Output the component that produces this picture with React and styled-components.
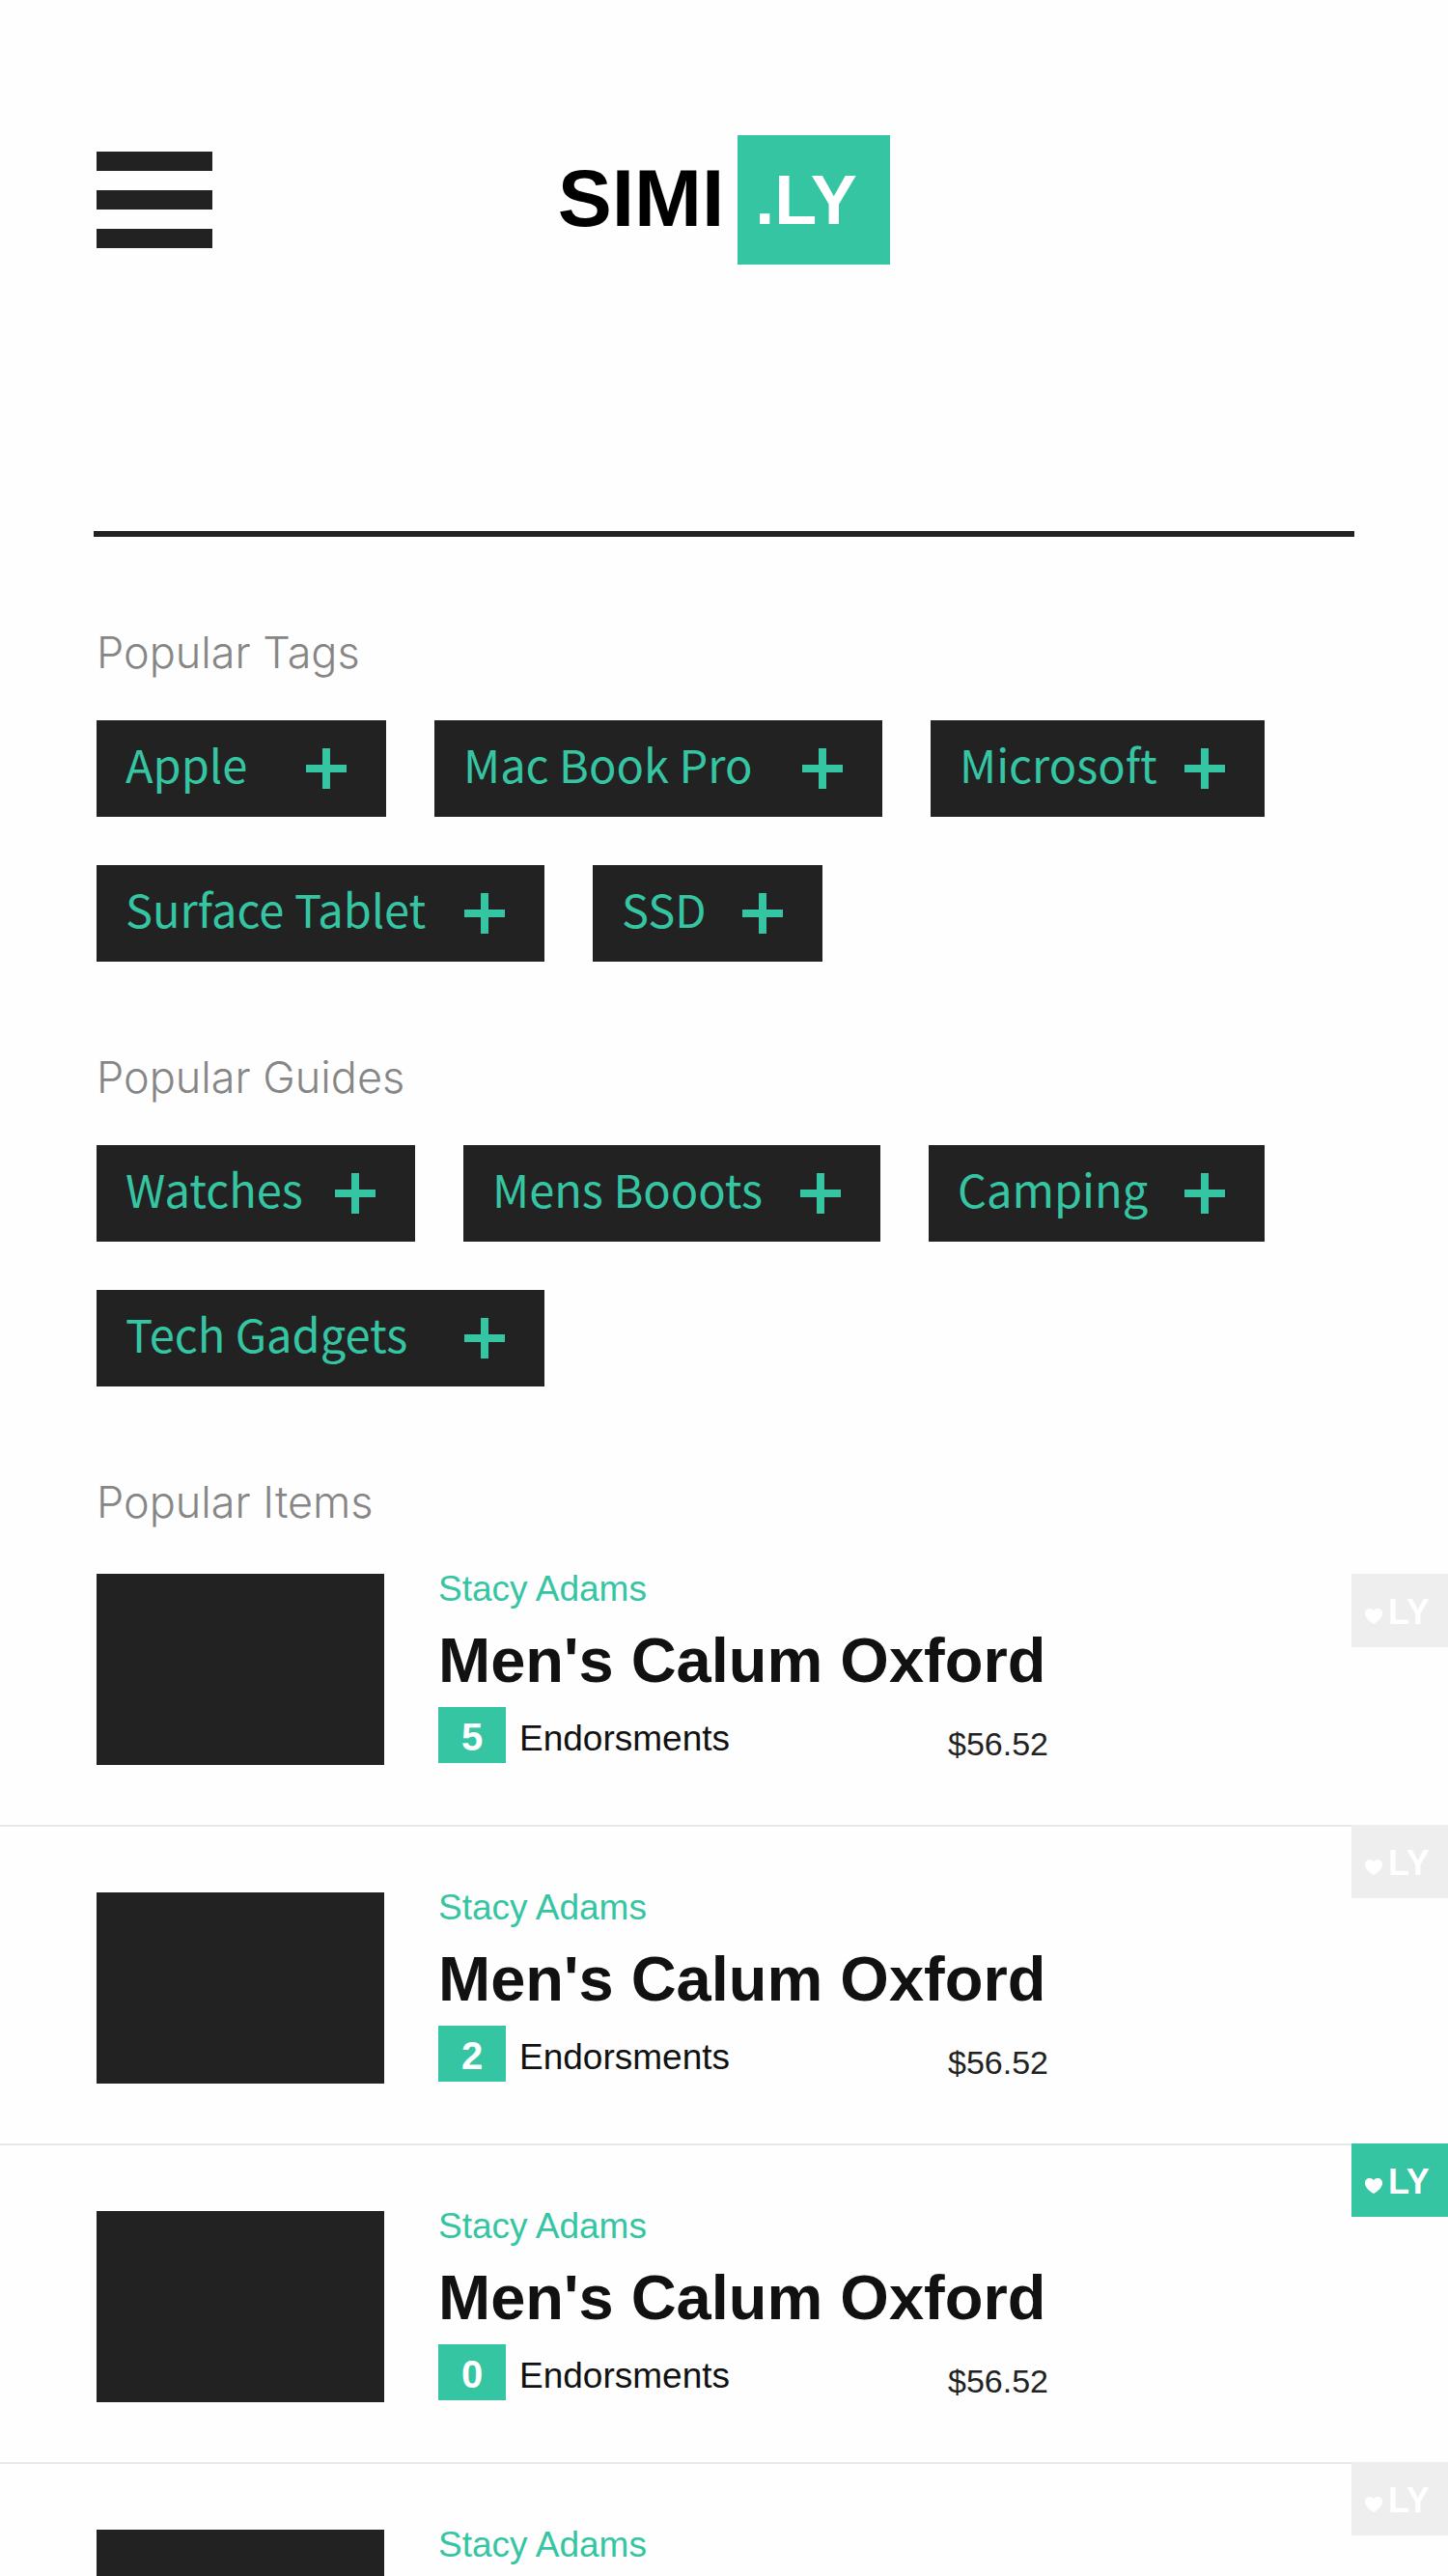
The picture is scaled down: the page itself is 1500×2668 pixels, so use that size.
import React from "react";
import styled, { createGlobalStyle } from "styled-components";

const GREEN = "#36c5a2";
const INK = "#222222";
const SANS = '"Liberation Sans", Arial, sans-serif';

const GlobalStyle = createGlobalStyle`
  *, *::before, *::after { box-sizing: border-box; }
  body {
    margin: 0;
    background: #fefefe;
    color: #111;
    font-family: ${SANS};
  }
  button { border: 0; padding: 0; margin: 0; background: none; cursor: pointer; }
  ul { list-style: none; margin: 0; padding: 0; }
  h1, h2, h3, p { margin: 0; }
`;

const Page = styled.div`
  min-height: 100vh;
`;

const Header = styled.header`
  display: grid;
  grid-template-columns: 1fr auto 1fr;
  align-items: center;
  padding: 140px 100px 0;
`;

const MenuButton = styled.button`
  display: flex;
  flex-direction: column;
  gap: 20px;
  width: 120px;
`;

const MenuBar = styled.span`
  height: 20px;
  background: ${INK};
`;

const Logo = styled.a`
  display: flex;
  align-items: center;
  gap: 14px;
  color: #000;
  font-weight: 700;
  text-decoration: none;
`;

const LogoName = styled.span`
  padding-bottom: 4px;
  font-size: 84px;
  line-height: 84px;
`;

const LogoMark = styled.span`
  width: 158px;
  padding: 30px 18px;
  background: ${GREEN};
  color: #fff;
  font-size: 72px;
  line-height: 74px;
`;

const SearchForm = styled.form`
  padding: 186px 97px 0;
`;

const SearchInput = styled.input`
  display: block;
  width: 100%;
  height: 96px;
  padding: 0 4px;
  border: 0;
  border-bottom: 6px solid ${INK};
  border-radius: 0;
  outline: 0;
  background: transparent;
  color: ${INK};
  font: 300 45px/48px Inter, sans-serif;
  appearance: none;
`;

const Section = styled.section`
  padding-top: 96px;
`;

const SectionTitle = styled.h2`
  padding: 0 100px;
  color: #868686;
  font: 300 45px/48px Inter, sans-serif;
`;

const ChipList = styled.ul`
  display: flex;
  flex-wrap: wrap;
  gap: 50px;
  padding: 46px 100px 0;
`;

const Chip = styled.button`
  display: flex;
  align-items: center;
  justify-content: space-between;
  width: ${(p) => p.$width}px;
  height: 100px;
  padding: 0 41px 0 30px;
  background: ${INK};
  color: ${GREEN};
  font: 400 47px/60px "Noto Sans CJK SC", "Noto Sans", sans-serif;
  white-space: nowrap;
`;

const ChipLabel = styled.span`
  padding-bottom: 10px;
`;

const PlusIcon = styled.svg`
  flex: none;
  width: 42px;
  height: 42px;
  fill: currentColor;
`;

const ItemList = styled.ul`
  padding-top: 50px;
`;

const Item = styled.li`
  display: flex;
  align-items: flex-start;
`;

const ItemBody = styled.article`
  flex: 1;
  display: flex;
  gap: 56px;
  padding: 68px 0 62px 100px;
  border-top: 2px solid #e9e9e9;

  ${Item}:first-child & {
    padding-top: 0;
    border-top: 0;
  }
`;

const Thumb = styled.div`
  flex: none;
  width: 298px;
  height: 198px;
  background: ${INK};
`;

const Info = styled.div`
  flex: 0 1 632px;
`;

const Brand = styled.p`
  color: ${GREEN};
  font-size: 37px;
  line-height: 32px;
`;

const ItemName = styled.h3`
  padding: 26px 0 16px;
  font-size: 65px;
  line-height: 64px;
  white-space: nowrap;
`;

const Meta = styled.div`
  display: flex;
  align-items: flex-end;
  justify-content: space-between;
`;

const Endorsements = styled.p`
  display: flex;
  align-items: baseline;
  gap: 14px;
  font-size: 37px;
`;

const Count = styled.span`
  width: 70px;
  padding-top: 4px;
  background: ${GREEN};
  color: #fff;
  font-size: 40px;
  font-weight: 700;
  line-height: 54px;
  text-align: center;
`;

const Price = styled.p`
  color: ${INK};
  font-size: 34px;
  line-height: 40px;
`;

const LikeButton = styled.button`
  flex: none;
  display: flex;
  align-items: baseline;
  gap: 6px;
  width: 100px;
  height: 76px;
  padding-left: 14px;
  background: ${(p) => (p.$active ? GREEN : "#eeeeee")};
  color: #fff;
  font: 700 36px/80px ${SANS};
`;

const HeartIcon = styled.svg`
  width: 18px;
  height: 16px;
  fill: currentColor;
`;

const tags = [
  { label: "Apple", width: 300 },
  { label: "Mac Book Pro", width: 464 },
  { label: "Microsoft", width: 346 },
  { label: "Surface Tablet", width: 464 },
  { label: "SSD", width: 238 },
];

const guides = [
  { label: "Watches", width: 330 },
  { label: "Mens Booots", width: 432 },
  { label: "Camping", width: 348 },
  { label: "Tech Gadgets", width: 464 },
];

const product = { brand: "Stacy Adams", name: "Men's Calum Oxford", price: "$56.52" };

const items = [
  { ...product, id: 1, count: 5, liked: false },
  { ...product, id: 2, count: 2, liked: false },
  { ...product, id: 3, count: 0, liked: true },
  { ...product, id: 4, count: 0, liked: false },
];

function Chips({ title, chips }) {
  return (
    <Section>
      <SectionTitle>{title}</SectionTitle>
      <ChipList>
        {chips.map(({ label, width }) => (
          <li key={label}>
            <Chip type="button" $width={width}>
              <ChipLabel>{label}</ChipLabel>
              <PlusIcon viewBox="0 0 42 42" aria-hidden="true">
                <path d="M17 0h8v17h17v8H25v17h-8V25H0v-8h17z" />
              </PlusIcon>
            </Chip>
          </li>
        ))}
      </ChipList>
    </Section>
  );
}

function ItemRow({ item }) {
  return (
    <Item>
      <ItemBody>
        <Thumb />
        <Info>
          <Brand>{item.brand}</Brand>
          <ItemName>{item.name}</ItemName>
          <Meta>
            <Endorsements>
              <Count>{item.count}</Count>
              <span>Endorsments</span>
            </Endorsements>
            <Price>{item.price}</Price>
          </Meta>
        </Info>
      </ItemBody>
      <LikeButton type="button" $active={item.liked} aria-pressed={item.liked}>
        <HeartIcon viewBox="0 0 18 16" aria-hidden="true">
          <path d="M9 16C6.500 14.500 0 10.500 0 5 0 2 2 0 4.700 0 6.600 0 8.200 .900 9 2.200 9.800 .900 11.400 0 13.300 0 16 0 18 2 18 5c0 5.500-6.500 9.500-9 11z" />
        </HeartIcon>
        LY
      </LikeButton>
    </Item>
  );
}

export default function App() {
  return (
    <Page>
      <GlobalStyle />
      <Header>
        <MenuButton type="button" aria-label="Menu">
          <MenuBar />
          <MenuBar />
          <MenuBar />
        </MenuButton>
        <Logo href="#">
          <LogoName>SIMI</LogoName>
          <LogoMark>.LY</LogoMark>
        </Logo>
      </Header>
      <SearchForm role="search">
        <SearchInput type="search" aria-label="Search" />
      </SearchForm>
      <main>
        <Chips title="Popular Tags" chips={tags} />
        <Chips title="Popular Guides" chips={guides} />
        <Section>
          <SectionTitle>Popular Items</SectionTitle>
          <ItemList>
            {items.map((item) => (
              <ItemRow key={item.id} item={item} />
            ))}
          </ItemList>
        </Section>
      </main>
    </Page>
  );
}
